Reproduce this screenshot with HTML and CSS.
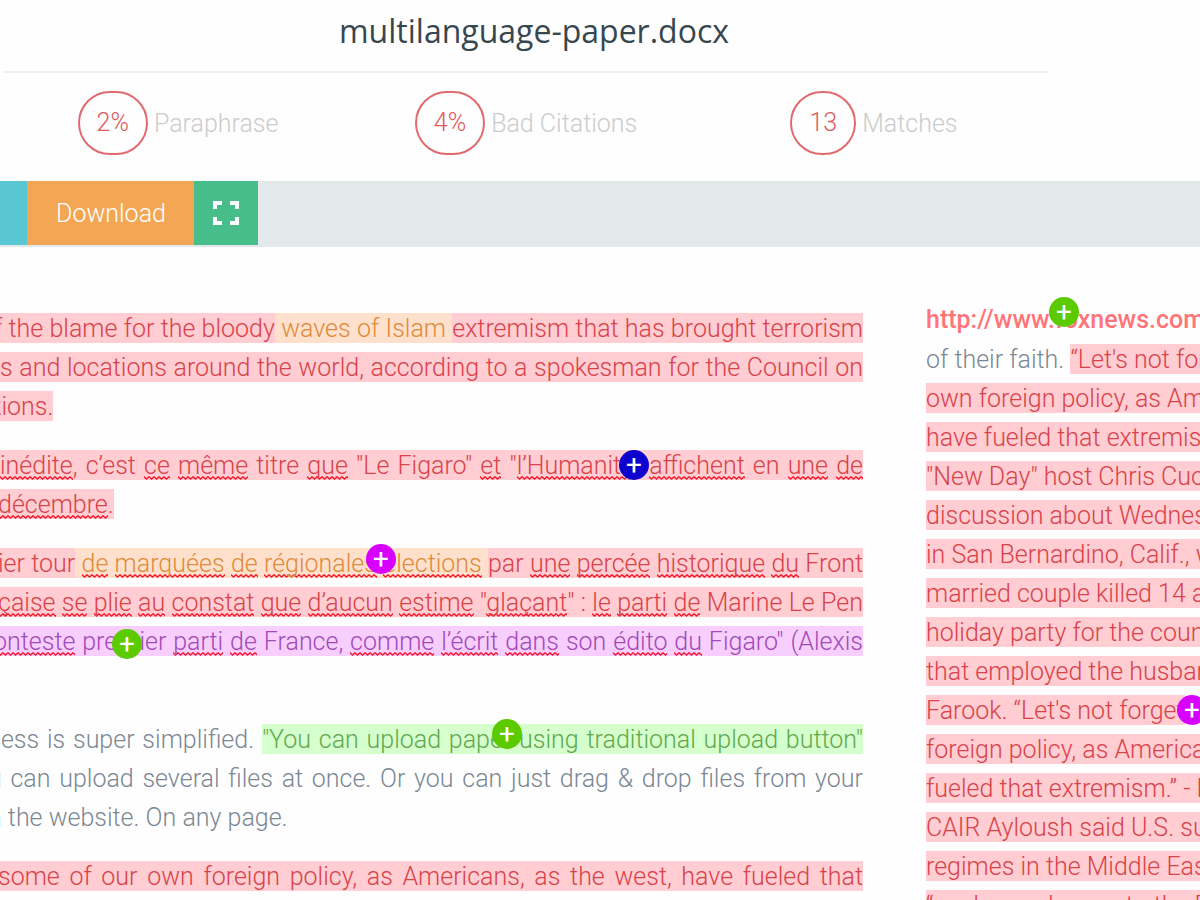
FILE: index.html
```html
<!DOCTYPE html>
<html lang="en">
<head>
<meta charset="utf-8">
<title>multilanguage-paper.docx</title>
<link rel="stylesheet" href="styles.css">
</head>
<body>
<header class="report-head">
  <h1 class="title">multilanguage-paper.docx</h1>
  <ul class="stats">
    <li class="stat"><span class="ring">2%</span><span>Paraphrase</span></li>
    <li class="stat"><span class="ring">4%</span><span>Bad Citations</span></li>
    <li class="stat"><span class="ring">13</span><span>Matches</span></li>
  </ul>
</header>
<nav class="toolbar" aria-label="Report actions">
  <button class="tool tool-blue" type="button" aria-label="Share"></button>
  <button class="tool tool-orange" type="button">Download</button>
  <button class="tool tool-green" type="button" aria-label="Full screen">
    <svg width="28" height="28" viewBox="0 0 28 28" fill="none" stroke="#fff" stroke-width="4"><path d="M3 10V4H10M18 4H25V10M25 18V24H18M10 24H3V18"/></svg>
  </button>
</nav>
<main class="report">
  <article class="paper">
    <p>
      <span class="line full cut-l"><mark class="red">of the blame for the bloody</mark><mark class="orange"> waves of Islam </mark><mark class="red">extremism that has brought terrorism</mark></span>
      <span class="line full"><mark class="red">s and locations around the world, according to a spokesman for the Council on</mark></span>
      <span class="line cut-l"><mark class="red">ations.</mark></span>
    </p>
    <p lang="fr">
      <span class="line full"><mark class="red"><u>inédite</u>, c’est <u>ce</u> <u>même</u> titre <u>que</u> "Le Figaro" <u>et</u> "<u>l’Humanité</u>" <u>affichent</u> en <u>une</u> <u>de</u></mark></span>
      <span class="line cut-s"><mark class="red"><u>décembre</u>.</mark></span>
    </p>
    <p lang="fr">
      <span class="line full cut-s"><mark class="red">ier tour</mark><mark class="orange"> <u>de</u> <u>marquées</u> <u>de</u> <u>régionales</u> <u>élections</u> </mark><mark class="red">par <u>une</u> <u>percée</u> <u>historique</u> <u>du</u> Front</mark></span>
      <span class="line full cut-s"><mark class="red"><u>çaise</u> <u>se</u> <u>plie</u> <u>au</u> <u>constat</u> <u>que</u> <u>d’aucun</u> <u>estime</u> "<u>glaçant</u>" : <u>le</u> <u>parti</u> <u>de</u> Marine Le Pen</mark></span>
      <span class="line full cut-c"><mark class="purple"><u>onteste</u> premier <u>parti</u> <u>de</u> France, <u>comme</u> <u>l’écrit</u> <u>dans</u> son <u>édito</u> <u>du</u> Figaro" (Alexis</mark></span>
      <br>
    </p>
    <p>
      <span class="line full cut-m">cess is super simplified. <mark class="green">"You can upload paper using traditional upload button"</mark></span>
      <span class="line full cut-m">u can upload several files at once. Or you can just drag &amp; drop files from your</span>
      <span class="line cut-m">n the website. On any page.</span>
    </p>
    <p>
      <span class="line full cut-s"><mark class="red">some of our own foreign policy, as Americans, as the west, have fueled that</mark></span>
    </p>
    <button class="plus blue at-humanite" type="button" aria-label="Show match">+</button>
    <button class="plus pink at-elections" type="button" aria-label="Show match">+</button>
    <button class="plus lime at-premier" type="button" aria-label="Show match">+</button>
    <button class="plus lime at-upload" type="button" aria-label="Show match">+</button>
  </article>
  <aside class="source">
    <a class="url" href="#source">http://www.foxnews.com</a>
    <p>of their faith. <mark class="red">“Let's not forget<br>
own foreign policy, as Americans<br>
have fueled that extremism<br>
"New Day" host Chris Cuomo<br>
discussion about Wednesday<br>
in San Bernardino, Calif., where<br>
married couple killed 14 at<br>
holiday party for the county<br>
that employed the husband<br>
Farook. “Let's not forget<br>
foreign policy, as Americans<br>
fueled that extremism.” - Ex<br>
CAIR Ayloush said U.S. support<br>
regimes in the Middle East<br>
“push people over to the East</mark></p>
    <button class="plus lime at-url" type="button" aria-label="Show match">+</button>
    <button class="plus pink at-forget" type="button" aria-label="Show match">+</button>
  </aside>
</main>
</body>
</html>
```
FILE: styles.css
```css
* { box-sizing: border-box; }
html { overflow: hidden; }
body {
  margin: 0;
  overflow-x: hidden;
  background: #fefefe;
  color: #7c8894;
  font: 300 25px/39px Roboto, sans-serif;
}
button { border: 0; font: inherit; }

.report-head {
  width: 87%;
  margin-left: 4px;
}
.title {
  margin: 0;
  padding: 8px 0 17px 16px;
  border-bottom: 2px solid #eceff1;
  color: #37474f;
  font: 400 32px/46px "Open Sans", sans-serif;
  text-align: center;
}
.stats {
  display: grid;
  grid-template-columns: repeat(3, 1fr);
  margin: 0;
  padding: 18px 0 26px;
  list-style: none;
  color: #ccc;
}
.stat {
  display: flex;
  justify-content: center;
  align-items: center;
  gap: 6px;
}
.ring {
  padding: 0 17px;
  border: 2px solid #e06a6e;
  border-radius: 35px;
  color: #dc5a60;
  line-height: 60px;
}

.toolbar {
  display: flex;
  height: 66px;
  padding-bottom: 2px;
  background: #e3e8eb;
}
.tool {
  display: flex;
  align-items: center;
  justify-content: center;
  padding: 0;
  color: #fff;
}
.tool-blue { width: 27px; background: #58c6d3; }
.tool-orange { padding: 0 28px 0 29px; background: #f3a653; }
.tool-green { width: 64px; background: #47be8a; }

.report {
  display: grid;
  grid-template-columns: minmax(0, 863fr) minmax(0, 274fr);
  column-gap: 63px;
}
.paper {
  position: relative;
  padding-top: 62px;
}
.paper p { margin: 0 0 20px; }
.line {
  display: block;
  white-space: nowrap;
}
.full {
  white-space: normal;
  text-align-last: justify;
}
.cut-s { margin-left: -2px; }
.cut-c { margin-left: -7px; }
.cut-m { margin-left: -12px; }
.cut-l { margin-left: -20px; }

mark { padding: 1px 0 0; color: #d8434a; }
.red { background: #ffcdd2; }
.orange { background: #ffe0cc; color: #dc8c3c; }
.purple { background: #f8ceff; color: #a04bb4; }
.green { background: #d5ffcc; color: #62a84e; }
/* Spell-check squiggle */
u {
  background: url("data:image/svg+xml,%3Csvg xmlns='http://www.w3.org/2000/svg' width='5' height='4'%3E%3Cpath d='M-1 1.2L0 .8L2.5 3L5 .8L6 1.2' fill='none' stroke='%23f5182c' stroke-width='1.4'/%3E%3C/svg%3E") left bottom repeat-x;
  text-decoration: none;
}

.source {
  position: relative;
  padding-top: 53px;
  overflow: hidden;
  white-space: nowrap;
}
.source p { margin: 1px 0 0; }
.url {
  color: #ff7478;
  font-weight: 500;
  text-decoration: none;
}

.plus {
  position: absolute;
  width: 30px;
  height: 30px;
  padding: 0;
  border-radius: 50%;
  color: #fff;
  font-size: 28px;
  font-weight: 400;
  line-height: 30px;
  text-align: center;
}
.blue { background: #1000cd; }
.pink { background: #d800ff; }
.lime { background: #5bcb00; }
.at-humanite { top: 203px; left: 619px; }
.at-elections { top: 297px; left: 366px; }
.at-premier { top: 382px; left: 112px; }
.at-upload { top: 472px; left: 492px; }
.at-url { top: 50px; left: 123px; }
.at-forget { top: 448px; left: 251px; }
```
